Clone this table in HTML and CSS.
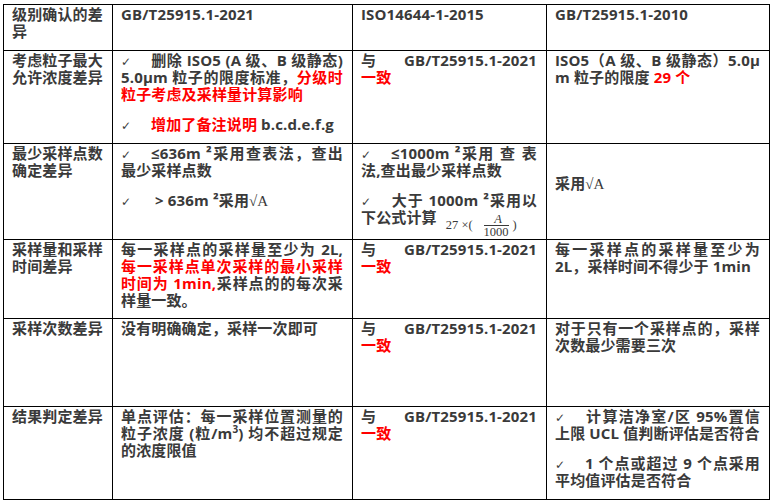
FILE: index.html
```html
<!DOCTYPE html>
<html lang="zh-CN">
<head>
<meta charset="utf-8">
<title>GB/T25915.1 差异对比</title>
<link rel="stylesheet" href="styles.css">
</head>
<body>
<div class="page">
<table class="cmp">
  <colgroup>
    <col class="c1"><col class="c2"><col class="c3"><col class="c4">
  </colgroup>
  <tr class="rh">
    <td>级别确认的差<br>异</td>
    <td>GB/T25915.1-2021</td>
    <td>ISO14644-1-2015</td>
    <td>GB/T25915.1-2010</td>
  </tr>
  <tr class="r1">
    <td>考虑粒子最大<br>允许浓度差异</td>
    <td>
      <p><span class="jl"><span class="ck">✓</span>删除 ISO5 (A 级、B 级静态)</span><span class="jl">5.0μm 粒子的限度标准，<span class="red">分级时</span></span><span class="red">粒子考虑及采样量计算影响</span></p>
      <p><span class="ck">✓</span><span class="red">增加了备注说明</span> b.c.d.e.f.g</p>
    </td>
    <td><span class="jl">与 GB/T25915.1-2021</span><span class="red">一致</span></td>
    <td><span class="jl">ISO5（A 级、B 级静态）5.0μ</span>m 粒子的限度 <span class="red">29 个</span></td>
  </tr>
  <tr class="r2">
    <td>最少采样点数<br>确定差异</td>
    <td>
      <p><span class="jl"><span class="ck">✓</span>≤636m ²采用查表法，查出</span>最少采样点数</p>
      <p><span class="ck">✓</span>&nbsp;&gt; 636m ²采用<span class="serif">√A</span></p>
    </td>
    <td>
      <p><span class="jl"><span class="ck">✓</span>≤1000m ²采用 查 表</span>法,查出最少采样点数</p>
      <p><span class="jl"><span class="ck">✓</span>大于 1000m ²采用以</span>下公式计算<span class="formula">27 ×(<span class="frac"><span class="num">A</span><span class="den">1000</span></span>)</span></p>
    </td>
    <td class="mid">采用<span class="serif">√A</span></td>
  </tr>
  <tr class="r3">
    <td>采样量和采样<br>时间差异</td>
    <td><span class="jl">每一采样点的采样量至少为 2L,</span><span class="jl red">每一采样点单次采样的最小采样</span><span class="jl"><span class="red">时间为 1min,</span>采样点的的每次采</span>样量一致。</td>
    <td><span class="jl">与 GB/T25915.1-2021</span><span class="red">一致</span></td>
    <td><span class="jl">每一采样点的采样量至少为</span>2L，采样时间不得少于 1min</td>
  </tr>
  <tr class="r4">
    <td>采样次数差异</td>
    <td>没有明确确定，采样一次即可</td>
    <td><span class="jl">与 GB/T25915.1-2021</span><span class="red">一致</span></td>
    <td><span class="jl">对于只有一个采样点的，采样</span>次数最少需要三次</td>
  </tr>
  <tr class="r5">
    <td>结果判定差异</td>
    <td><span class="jl">单点评估：每一采样位置测量的</span><span class="jl">粒子浓度 (粒/m<sup>3</sup>) 均不超过规定</span>的浓度限值</td>
    <td><span class="jl">与 GB/T25915.1-2021</span><span class="red">一致</span></td>
    <td>
      <p><span class="jl"><span class="ck">✓</span>计算洁净室/区 95%置信</span>上限 UCL 值判断评估是否符合</p>
      <p><span class="jl"><span class="ck">✓</span>1 个点或超过 9 个点采用</span>平均值评估是否符合</p>
    </td>
  </tr>
</table>
</div>
</body>
</html>
```

FILE: styles.css
```css
html, body {
  margin: 0;
  padding: 0;
  background: #ffffff;
}

.page {
  padding: 4px 0 0 3px;
}

.cmp {
  border-collapse: collapse;
  table-layout: fixed;
  width: 766px;
  font-family: "Open Sans", "Noto Sans CJK SC", sans-serif;
  font-weight: 700;
  font-size: 15px;
  line-height: 17px;
  color: #3a3a3a;
}

.c1 { width: 109px; }
.c2 { width: 240px; }
.c3 { width: 194px; }
.c4 { width: 223px; }

.cmp td {
  border: 1px solid #000000;
  vertical-align: top;
  padding: 1px 9px 0 8px;
  white-space: nowrap;
  overflow: hidden;
  letter-spacing: 0.15px;
}

.rh td { height: 44px; }
.r1 td { height: 91px; }
.r2 td { height: 94px; }
.r3 td { height: 77px; }
.r4 td { height: 86px; }
.r5 td { height: 91px; }

.cmp td.mid {
  vertical-align: middle;
  padding-bottom: 18px;
  height: 76px;
}

.cmp p {
  margin: 0 0 13px 0;
}

.cmp p:last-child {
  margin-bottom: 0;
}

.jl {
  display: block;
  white-space: normal;
  text-align: justify;
  text-align-last: justify;
}

.red {
  color: #ff0000;
}

.ck {
  display: inline-block;
  width: 30px;
  font-family: "DejaVu Sans", sans-serif;
  font-weight: 400;
  font-size: 12px;
  line-height: 10px;
  letter-spacing: 0;
  color: #3a3a3a;
}

.serif {
  font-family: "Liberation Serif", serif;
  font-weight: 400;
  font-size: 15px;
  line-height: 10px;
  letter-spacing: 0;
}

sup {
  font-size: 10px;
  line-height: 0;
  vertical-align: 6px;
}

.formula {
  font-family: "Liberation Serif", serif;
  font-weight: 400;
  font-size: 12.5px;
  letter-spacing: 0;
  margin: -14px 0 -14px 9px;
  display: inline-flex;
  align-items: center;
  vertical-align: -6px;
  line-height: 12px;
}

.frac {
  display: inline-flex;
  flex-direction: column;
  align-items: stretch;
  text-align: center;
  margin: 0 4px 0 11px;
  line-height: 12px;
}

.num {
  font-style: italic;
  border-bottom: 1px solid #3a3a3a;
  padding: 0 6px 0 10px;
}

.den {
  text-align: left;
}
```
